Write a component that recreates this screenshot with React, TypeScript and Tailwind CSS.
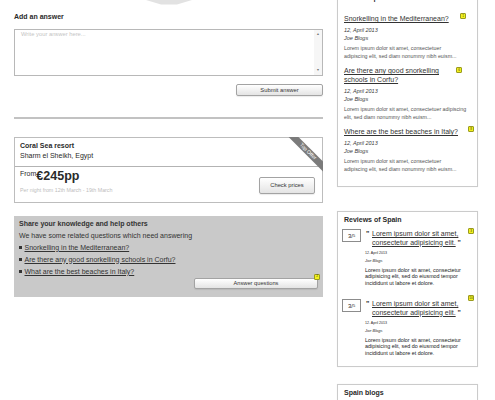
import React from "react";

const related = [
  {
    title: ["Snorkelling in the Mediterranean?"],
    lorem: ["Lorem ipsum dolor sit amet, consectetuer", "adipiscing elit, sed diam nonummy nibh euism..."],
    badge: "left-[116px] top-[-1px]",
    n: "1",
  },
  {
    title: ["Are there any good snorkelling", "schools in Corfu?"],
    lorem: ["Lorem ipsum dolor sit amet, consectetuer adipiscing", "elit, sed diam nonummy nibh euism..."],
    badge: "left-[112px] top-[1px]",
    n: "6",
  },
  {
    title: ["Where are the best beaches in Italy?"],
    lorem: ["Lorem ipsum dolor sit amet, consectetuer", "adipiscing elit, sed diam nonummy nibh euism..."],
    badge: "left-[124px] top-[-1px]",
    n: "8",
  },
];

const reviews = [
  { badge: "left-[126px] top-[-1px]", n: "3", mt: "mt-[4px]" },
  { badge: "left-[126px] top-[-4px]", n: "10", mt: "mt-[13px]" },
];

const questions = [
  "Snorkelling in the Mediterranean?",
  "Are there any good snorkelling schools in Corfu?",
  "What are the best beaches in Italy?",
];

function Badge({ n, className }: { n: string; className: string }) {
  return (
    <span
      className={`absolute flex h-[6px] w-[6px] items-center justify-center rounded-[1px] border-[0.5px] border-[#9a9a20] bg-[#f2f21c] text-[3px] leading-none text-[#333] ${className}`}
    >
      {n}
    </span>
  );
}

function GreyButton({ label, className }: { label: string; className: string }) {
  return (
    <div
      className={`flex items-center justify-center rounded-[2px] border border-[#a3a3a3] bg-gradient-to-b from-white to-[#e4e4e4] text-[#333] shadow-[0_1px_1px_rgba(0,0,0,0.08)] ${className}`}
    >
      {label}
    </div>
  );
}

export default function App() {
  return (
    <div className="relative h-[400px] w-[495px] overflow-hidden bg-white font-['Liberation_Sans',Arial,sans-serif] text-[#2a2a2a]">
      <div className="flex gap-[14px] pl-[14px]">
        {/* main column */}
        <div className="flex w-[309px] flex-col">
          <div className="flex h-[5px] justify-center">
            <svg width="46" height="5" viewBox="0 0 46 5">
              <polygon points="0,0 46,0 31,4.5 15,4.5" fill="#e2e2e2" />
            </svg>
          </div>

          <h2 className="mt-[7px] text-[7px] font-bold leading-[10px]">Add an answer</h2>

          <div className="mt-[7px] flex h-[47px] border border-[#b8b8b8] bg-white">
            <div className="flex-1 px-[6px] pt-[1px] text-[5.8px] leading-[7px] text-[#c4c4c4]">Write your answer here...</div>
            <div className="flex w-[8px] flex-col items-center justify-between bg-[#f6f6f6] py-[2px] text-[3.5px] leading-[5px] text-[#777]">
              <span>▲</span>
              <span>▼</span>
            </div>
          </div>

          <GreyButton label="Submit answer" className="mt-[8px] h-[12px] w-[87px] self-end text-[5.8px]" />

          <div className="mt-[21px] h-[1.5px] bg-[#c2c2c2]" />

          <div className="relative mt-[18px] h-[66px] border border-[#bdbdbd] bg-white">
            <div className="h-[29px] border-b border-[#b3b3b3] px-[5px] pt-[3px] text-[7px] leading-[10px]">
              <div className="font-bold">Coral Sea resort</div>
              <div>Sharm el Sheikh, Egypt</div>
            </div>
            <div className="flex items-start justify-between pl-[5px] pr-[7px]">
              <div className="pt-[3px]">
                <div className="flex items-start">
                  <span className="text-[7px] leading-[8px]">From</span>
                  <span className="text-[12.5px] font-bold leading-[13px]">€245pp</span>
                </div>
                <div className="mt-[4px] text-[5.3px] leading-[7px] text-[#bdbdbd]">Per night from 12th March - 19th March</div>
              </div>
              <GreyButton label="Check prices" className="mt-[10px] h-[17px] w-[56px] text-[5.8px]" />
            </div>
            <div className="absolute right-[-1px] top-[-1px] h-[40px] w-[40px] overflow-hidden">
              <div className="absolute left-[-5px] top-[11px] h-[7px] w-[60px] rotate-45 bg-[#7b7b7b] text-center text-[5.2px] leading-[7px] text-white">
                Top Offer
              </div>
            </div>
          </div>

          <div className="mt-[13px] flex h-[81px] flex-col bg-[#c9c9c9] pl-[5px] pt-[2px] text-[7px] leading-[12px] text-[#333]">
            <div className="font-bold">Share your knowledge and help others</div>
            <div>We have some related questions which need answering</div>
            {questions.map((q) => (
              <div key={q} className="flex items-center">
                <span className="mr-[3px] h-[2.5px] w-[2.5px] bg-[#333]" />
                <span className="underline">{q}</span>
              </div>
            ))}
            <div className="relative mr-[5px] self-end">
              <GreyButton label="Answer questions" className="h-[11px] w-[124px] text-[5.7px]" />
              <Badge n="2" className="right-[-2px] top-[-4px]" />
            </div>
          </div>
        </div>

        {/* sidebar */}
        <div className="flex w-[141px] flex-col">
          <div className="-mt-[16px] border border-[#cbcbcb] px-[6px] pb-[13px] pt-[8px] shadow-[0_0_1px_rgba(0,0,0,0.08)]">
            <h3 className="text-[7px] font-bold leading-[10px]">Related questions</h3>
            {related.map((r, i) => (
              <div key={i} className={`relative ${i === 0 ? "mt-[11px]" : "mt-[6px]"}`}>
                <div className="text-[7px] leading-[9px] text-[#333] underline">
                  {r.title.map((t) => (
                    <div key={t} className="whitespace-nowrap">{t}</div>
                  ))}
                </div>
                <div className="mt-[3px] text-[5.5px] italic leading-[8px] text-[#3a3a3a]">12, April 2013</div>
                <div className="text-[5.5px] italic leading-[8px] text-[#3a3a3a]">Joe Blogs</div>
                <div className="mt-[2px] text-[5.3px] leading-[8px] text-[#555]">
                  {r.lorem.map((l) => (
                    <div key={l} className="whitespace-nowrap">{l}</div>
                  ))}
                </div>
                <Badge n={r.n} className={r.badge} />
              </div>
            ))}
          </div>

          <div className="mt-[24px] border border-[#cbcbcb] px-[4px] pb-[10px] pt-[3px] shadow-[0_0_1px_rgba(0,0,0,0.08)]">
            <h3 className="pl-[2px] text-[7px] font-bold leading-[10px]">Reviews of Spain</h3>
            {reviews.map((r, i) => (
              <div key={i} className={`relative flex items-start ${r.mt}`}>
                <div className="flex h-[13px] w-[19px] items-center justify-center border border-[#8c8c8c] bg-white text-[6px] leading-none">
                  3/<span className="text-[4px]">5</span>
                </div>
                <div className="ml-[4px] flex flex-col">
                  <div className="mt-[1px] flex">
                    <span className="w-[7px] pl-[1px] text-[7px] font-bold leading-[8.5px]">"</span>
                    <div className="whitespace-nowrap text-[7px] leading-[8.5px] text-[#333]">
                      <div className="underline">Lorem ipsum dolor sit amet,</div>
                      <div>
                        <span className="underline">consectetur adipisicing elit.</span>
                        <span className="font-bold"> "</span>
                      </div>
                    </div>
                  </div>
                  <div className="mt-[2.5px] text-[3.6px] leading-[7px]">12. April 2013</div>
                  <div className="text-[4px] italic leading-[8px]">Joe Blogs</div>
                  <div className="mt-[2px] whitespace-nowrap text-[5.4px] leading-[6.5px] text-[#222]">
                    <div>Lorem ipsum dolor sit amet, consectetur</div>
                    <div>adipisicing elit, sed do eiusmod tempor</div>
                    <div>incididunt ut labore et dolore.</div>
                  </div>
                </div>
                <Badge n={r.n} className={r.badge} />
              </div>
            ))}
          </div>

          <div className="mt-[17px] h-[40px] border border-[#cbcbcb] px-[6px] pt-[2.5px] shadow-[0_0_1px_rgba(0,0,0,0.08)]">
            <h3 className="text-[7px] font-bold leading-[10px]">Spain blogs</h3>
          </div>
        </div>
      </div>
    </div>
  );
}
